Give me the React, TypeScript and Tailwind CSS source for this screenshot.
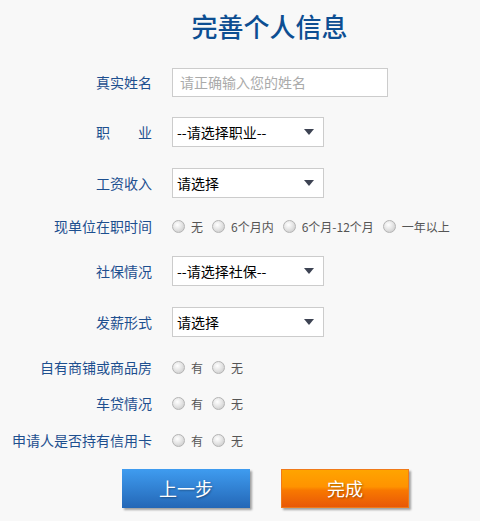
import React from "react";

const font = "font-['Noto_Sans_CJK_SC','Noto_Sans',sans-serif]";

const Label = ({ children }: { children: React.ReactNode }) => (
  <div className="w-[152px] shrink-0 text-right text-[14px] leading-none text-[#1d4f8f]">
    {children}
  </div>
);

const Row = ({
  label,
  mt,
  children,
}: {
  label: React.ReactNode;
  mt: string;
  children: React.ReactNode;
}) => (
  <div className={`flex h-[30px] items-center gap-[20px] ${mt}`}>
    <Label>{label}</Label>
    {children}
  </div>
);

const Select = ({ text }: { text: string }) => (
  <div className="flex h-[30px] w-[152px] items-center justify-between border border-[#cccccc] bg-white pl-[4px] pr-[9px] text-[14px] text-black">
    <span>{text}</span>
    <svg width="10" height="6" viewBox="0 0 10 6">
      <path d="M0 0h10L5 6z" fill="#3d4353" />
    </svg>
  </div>
);

const Radio = ({ label }: { label: string }) => (
  <label className="mr-[9px] flex items-center">
    <span className="h-[13px] w-[13px] rounded-full border border-[#b4b4b4] bg-[radial-gradient(circle_at_40%_35%,#ffffff_0%,#e6e6e6_45%,#c4c4c4_100%)]" />
    <span className="ml-[6px] mt-[1px] text-[12px] leading-none text-[#555555]">{label}</span>
  </label>
);

const Radios = ({ items }: { items: string[] }) => (
  <div className="flex items-center">
    {items.map((t) => (
      <Radio key={t} label={t} />
    ))}
  </div>
);

export default function App() {
  return (
    <div className={`${font} h-[521px] w-[480px] bg-[#f8f8f8]`}>
      <div className="flex h-[50px] items-center justify-center pl-[59px] text-[26px] font-medium text-[#0d4e92]">
        完善个人信息
      </div>

      <Row label="真实姓名" mt="mt-[17px]">
        <div className="flex h-[29px] w-[216px] items-center border border-[#cccccc] bg-white pl-[7px] text-[14px] text-[#aaaaaa]">
          请正确输入您的姓名
        </div>
      </Row>

      <Row label={<span className="inline-flex w-[56px] justify-between"><span>职</span><span>业</span></span>} mt="mt-[20px]">
        <Select text="--请选择职业--" />
      </Row>

      <Row label="工资收入" mt="mt-[21px]">
        <Select text="请选择" />
      </Row>

      <Row label="现单位在职时间" mt="mt-[13px]">
        <Radios items={["无", "6个月内", "6个月-12个月", "一年以上"]} />
      </Row>

      <Row label="社保情况" mt="mt-[15px]">
        <Select text="--请选择社保--" />
      </Row>

      <Row label="发薪形式" mt="mt-[21px]">
        <Select text="请选择" />
      </Row>

      <Row label="自有商铺或商品房" mt="mt-[15px]">
        <Radios items={["有", "无"]} />
      </Row>

      <Row label="车贷情况" mt="mt-[6px]">
        <Radios items={["有", "无"]} />
      </Row>

      <Row label="申请人是否持有信用卡" mt="mt-[7px]">
        <Radios items={["有", "无"]} />
      </Row>

      <div className="mt-[14px] flex gap-[31px] pl-[122px]">
        <button className="h-[39px] w-[128px] bg-[linear-gradient(#3f9cf0,#2467b6)] text-[18px] text-white shadow-[2px_2px_2px_rgba(0,0,0,0.35)] [text-shadow:1px_1px_2px_rgba(0,0,0,0.35)]">
          上一步
        </button>
        <button className="h-[39px] w-[128px] border border-[#f07a1a] bg-[linear-gradient(#ffa400_0%,#ff9300_45%,#f87800_55%,#e85808_100%)] text-[18px] text-white shadow-[2px_2px_2px_rgba(0,0,0,0.35)] [text-shadow:1px_1px_2px_rgba(0,0,0,0.35)]">
          完成
        </button>
      </div>
    </div>
  );
}
